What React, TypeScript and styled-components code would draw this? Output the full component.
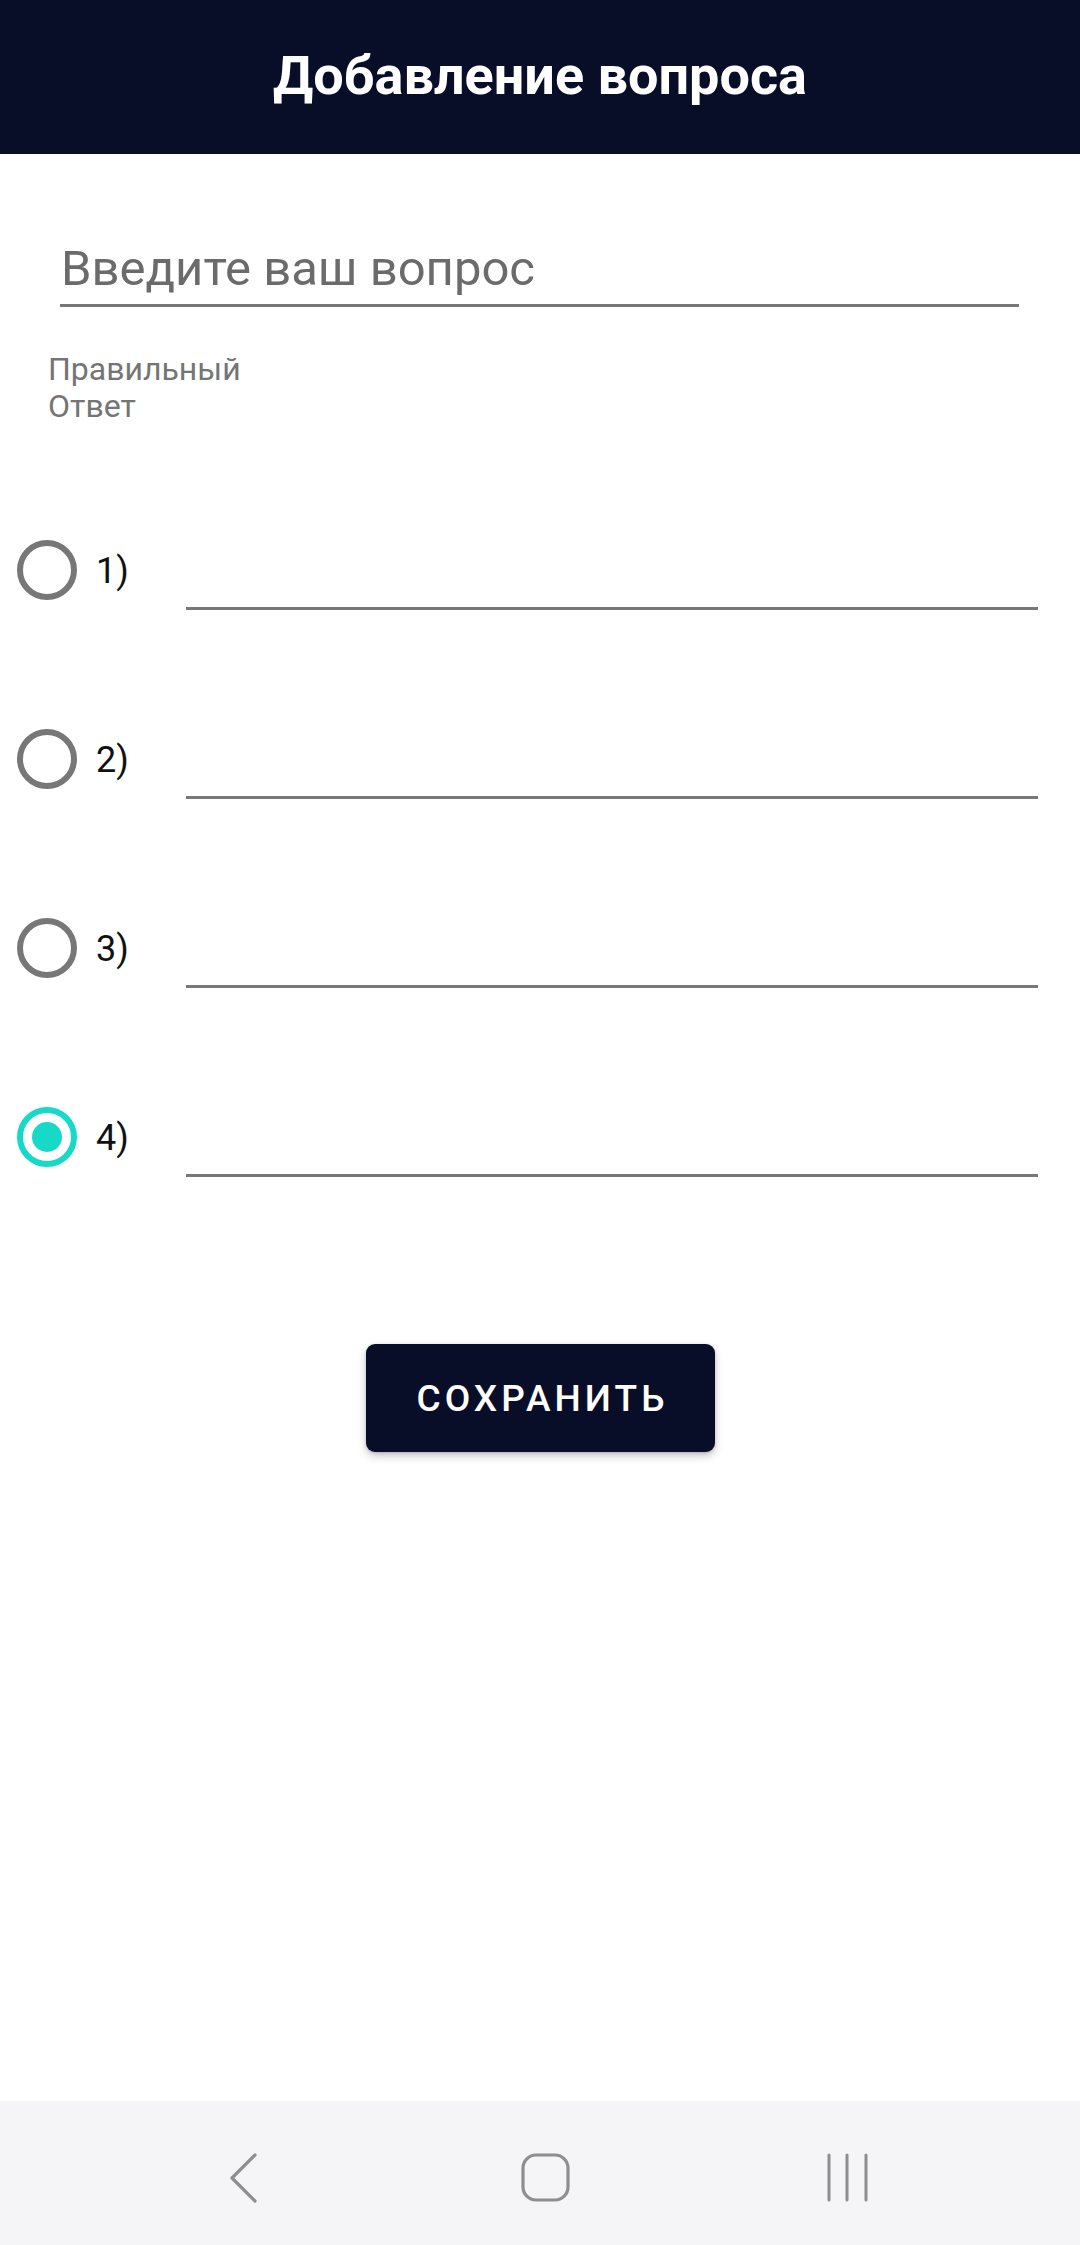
import React from "react";
import styled, { createGlobalStyle } from "styled-components";

const Global = createGlobalStyle`
  html, body { margin: 0; padding: 0; background: #ffffff; }
  body { font-family: Roboto, "Noto Sans", sans-serif; }
  * { box-sizing: border-box; }
`;

const Page = styled.div`
  width: 1080px;
  min-height: 2245px;
  display: flex;
  flex-direction: column;
  background: #ffffff;
`;

const Header = styled.header`
  height: 154px;
  background: #080e28;
  display: flex;
  align-items: center;
  justify-content: center;
  padding-bottom: 4px;
`;

const Title = styled.h1`
  margin: 0;
  color: #ffffff;
  font-family: Roboto, sans-serif;
  font-weight: 700;
  font-size: 54px;
  letter-spacing: 0px;
`;

const Main = styled.main`
  display: flex;
  flex-direction: column;
`;

const QuestionField = styled.div`
  margin: 86px 0 0 60px;
  width: 959px;
  padding: 0 0 7px 1px;
  border-bottom: 3px solid #777777;
  font-size: 49px;
  line-height: 1.172;
  color: #6b6b6b;
`;

const CorrectLabel = styled.div`
  margin: 44px 0 0 48px;
  font-size: 32px;
  line-height: 37px;
  color: #757575;
`;

const Answers = styled.div`
  margin-top: 115px;
  display: flex;
  flex-direction: column;
  gap: 119px;
`;

const Row = styled.div`
  display: flex;
  align-items: flex-start;
`;

const Radio = styled.div<{ $checked?: boolean }>`
  width: 60px;
  height: 60px;
  margin-left: 17px;
  border-radius: 50%;
  border: 6px solid ${(p) => (p.$checked ? "#17d9c7" : "#777777")};
  display: flex;
  align-items: center;
  justify-content: center;
  &::after {
    content: "";
    width: 30px;
    height: 30px;
    border-radius: 50%;
    background: #17d9c7;
    display: ${(p) => (p.$checked ? "block" : "none")};
  }
`;

const Num = styled.div`
  margin-left: 19px;
  width: 90px;
  padding-top: 1px;
  font-size: 36px;
  line-height: 60px;
  color: #111111;
`;

const AnswerField = styled.div`
  width: 852px;
  height: 70px;
  border-bottom: 3px solid #777777;
`;

const ButtonWrap = styled.div`
  margin-top: 167px;
  display: flex;
  justify-content: center;
  padding-left: 1px;
`;

const SaveButton = styled.button`
  width: 349px;
  height: 108px;
  border: none;
  border-radius: 9px;
  background: #080e28;
  color: #ffffff;
  font-family: Roboto, sans-serif;
  font-weight: 500;
  font-size: 37px;
  letter-spacing: 4px;
  padding: 0 0 0 4px;
  box-shadow: 0 4px 8px rgba(0, 0, 0, 0.22), 0 1px 3px rgba(0, 0, 0, 0.15);
  cursor: pointer;
`;

const NavBar = styled.nav`
  margin-top: auto;
  height: 144px;
  background: #f5f5f7;
  display: flex;
  align-items: center;
  justify-content: center;
  gap: 202px;
  padding: 10px 0 0 12px;
`;

const NavCell = styled.div`
  width: 100px;
  display: flex;
  justify-content: center;
`;

export default function App() {
  const answers = ["1)", "2)", "3)", "4)"];
  return (
    <>
      <Global />
      <Page>
        <Header>
          <Title>Добавление вопроса</Title>
        </Header>
        <Main>
          <QuestionField>Введите ваш вопрос</QuestionField>
          <CorrectLabel>
            Правильный
            <br />
            Ответ
          </CorrectLabel>
          <Answers>
            {answers.map((a, i) => (
              <Row key={a}>
                <Radio $checked={i === 3} />
                <Num>{a}</Num>
                <AnswerField />
              </Row>
            ))}
          </Answers>
          <ButtonWrap>
            <SaveButton>СОХРАНИТЬ</SaveButton>
          </ButtonWrap>
        </Main>
        <NavBar>
          <NavCell>
            <svg width="32" height="52" viewBox="0 0 32 52">
              <polyline
                points="27,3 4,26 27,49"
                fill="none"
                stroke="#8e8e8e"
                strokeWidth="3.2"
                strokeLinecap="round"
                strokeLinejoin="round"
              />
            </svg>
          </NavCell>
          <NavCell>
            <svg width="52" height="52" viewBox="0 0 52 52">
              <rect
                x="3"
                y="3"
                width="45"
                height="45"
                rx="13"
                fill="none"
                stroke="#8e8e8e"
                strokeWidth="3.2"
              />
            </svg>
          </NavCell>
          <NavCell>
            <svg width="44" height="52" viewBox="0 0 44 52">
              <g stroke="#8e8e8e" strokeWidth="3" strokeLinecap="round">
                <line x1="3" y1="3" x2="3" y2="48" />
                <line x1="21" y1="3" x2="21" y2="48" />
                <line x1="40" y1="3" x2="40" y2="48" />
              </g>
            </svg>
          </NavCell>
        </NavBar>
      </Page>
    </>
  );
}
